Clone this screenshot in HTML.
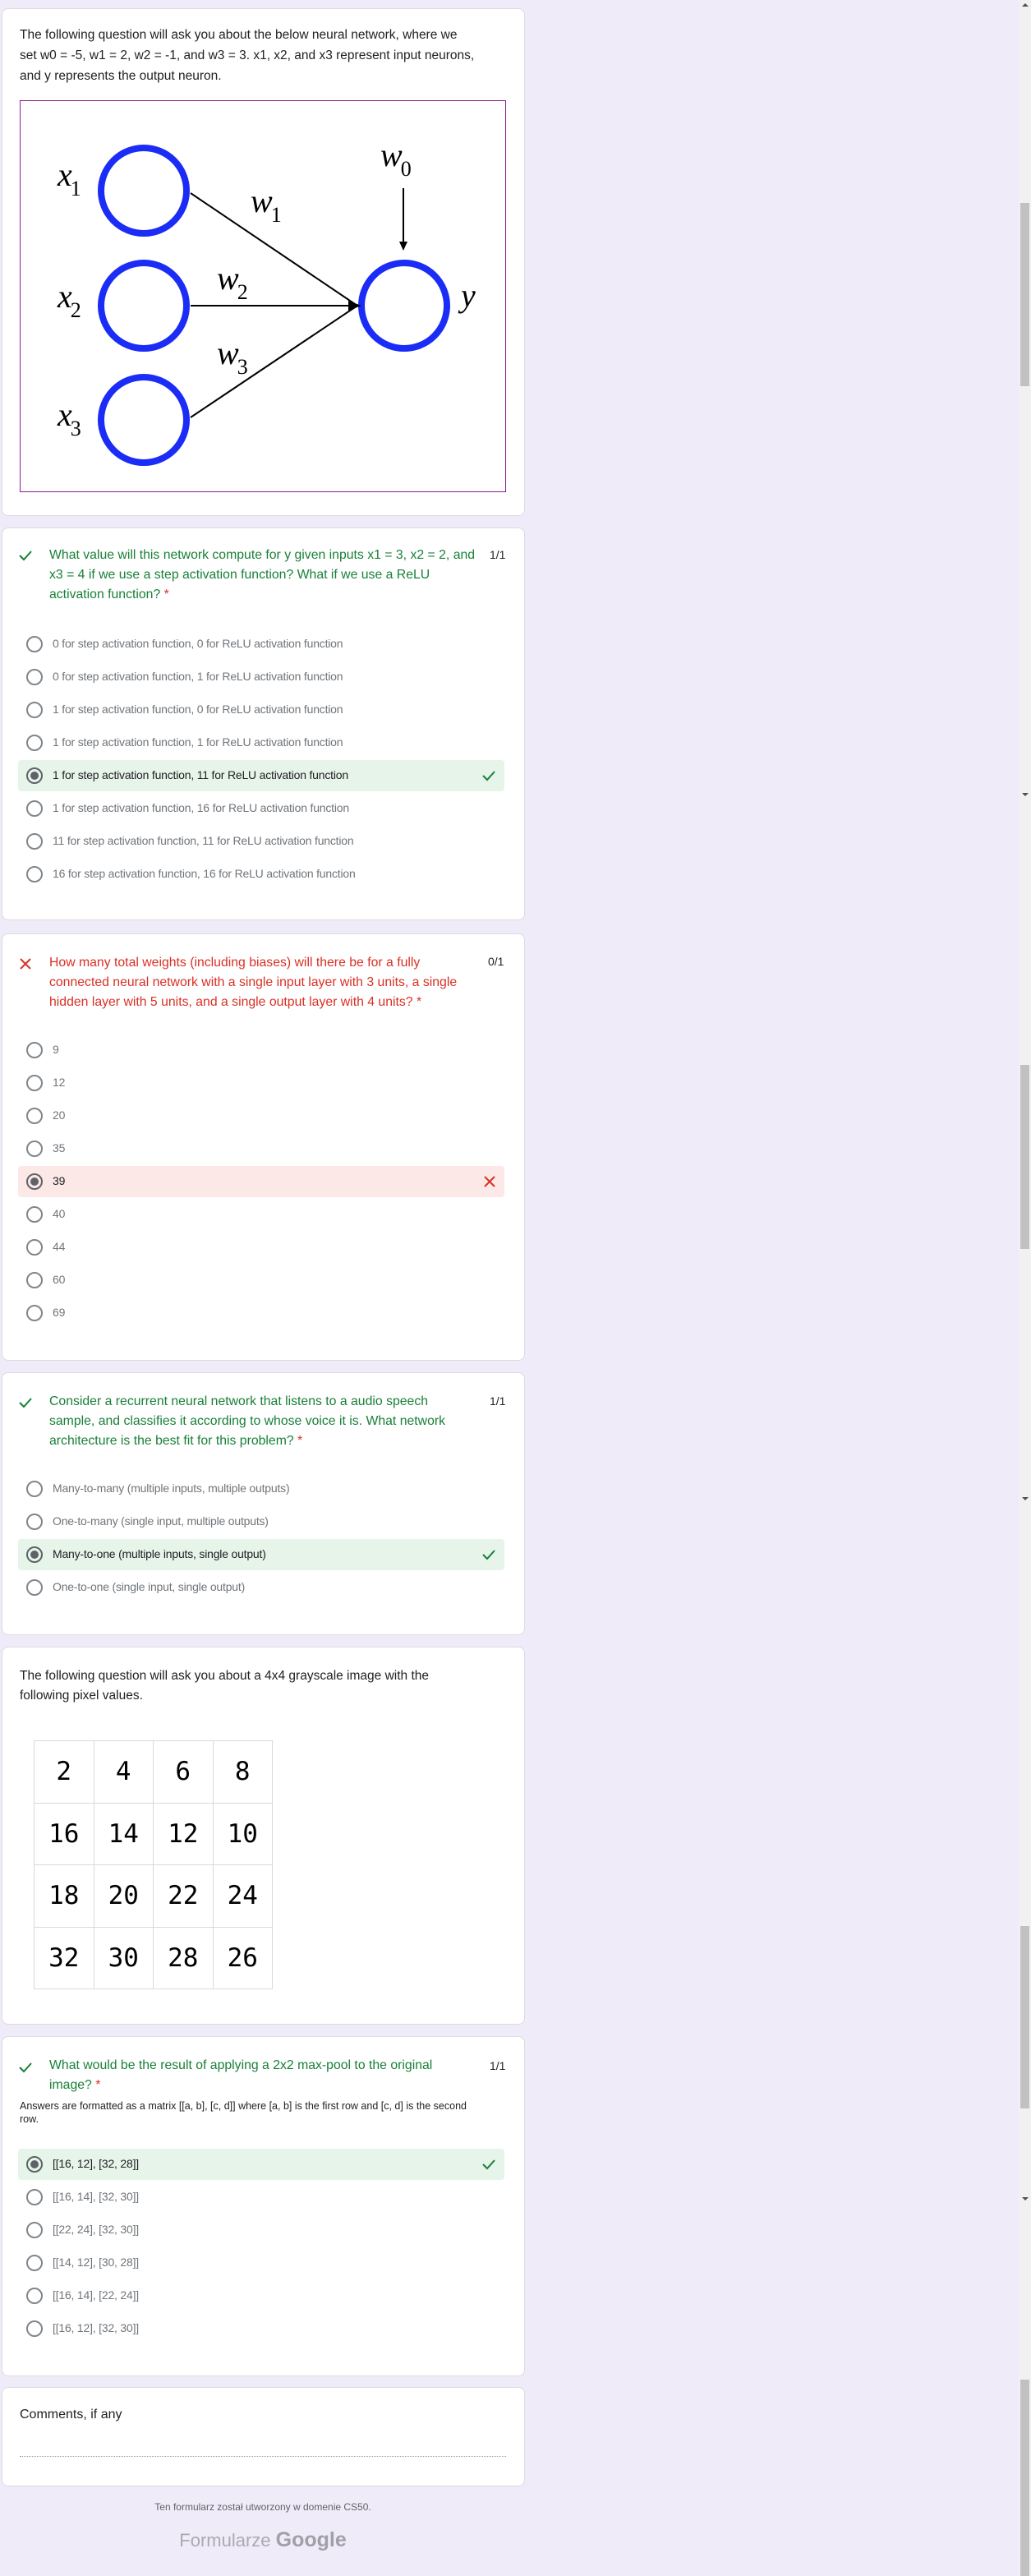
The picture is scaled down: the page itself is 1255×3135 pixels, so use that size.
<!DOCTYPE html>
<html><head><meta charset="utf-8"><style>
*{margin:0;padding:0;box-sizing:border-box}
body{width:1255px;height:3135px;background:#efebf8;position:relative;overflow:hidden;font-family:"Liberation Sans",Arial,sans-serif;color:#202124}
.card{position:absolute;left:2px;width:637px;background:#fff;border:1px solid #dadce0;border-radius:8px}
.a{position:absolute;white-space:nowrap}
.hd{font-size:15.5px;line-height:25px;color:#202124;left:24px}
.q{font-size:15.8px;line-height:24px;left:60px}
.g{color:#188038}.r{color:#d93025}
.pts{font-size:14px;color:#202124}
.opt{position:absolute;left:22px;width:592px;height:38px;border-radius:4px}
.rad{position:absolute;left:10px;top:9px;width:20px;height:20px;border:2px solid #80868b;border-radius:50%}
.rad.s{border-color:#5f6368}
.rad.s::after{content:"";position:absolute;left:3px;top:3px;width:10px;height:10px;border-radius:50%;background:#5f6368}
.ot{position:absolute;left:42px;top:10px;font-size:14px;color:#70757a;white-space:nowrap;letter-spacing:-0.2px}
.sel .ot{color:#202124}
.okb{background:#e6f4ea}.bad{background:#fce8e6}
.mk{position:absolute;right:10px;top:11px}
.sb{position:absolute;left:1240px;top:0;width:15px;height:3135px;background:#f1f1f1}
.th{position:absolute;left:1242px;width:11px;background:#c1c1c1}
.ar{position:absolute;left:1244px;width:0;height:0;border-left:4px solid transparent;border-right:4px solid transparent}
.up{border-bottom:4px solid #505050}.dn{border-top:4px solid #505050}
table{border-collapse:collapse;position:absolute;left:41px;top:2118px}
td{width:72.5px;height:75.5px;border:1px solid #d9d9d9;text-align:center;font-family:"DejaVu Sans Mono",monospace;font-size:31px;color:#000}
</style></head><body>

<div class="sb"></div>
<div class="th" style="top:247px;height:223px"></div>
<div class="th" style="top:1296px;height:224px"></div>
<div class="th" style="top:2344px;height:222px"></div>
<div class="th" style="top:2896px;height:239px"></div>
<div class="ar up" style="top:4px"></div>
<div class="ar dn" style="top:965px"></div>
<div class="ar dn" style="top:1822px"></div>
<div class="ar dn" style="top:2674px"></div>

<!-- card 1 -->
<div class="card" style="top:10px;height:618px"></div>
<div class="a hd" style="top:30px">The following question will ask you about the below neural network, where we<br>set w0 = -5, w1 = 2, w2 = -1, and w3 = 3. x1, x2, and x3 represent input neurons,<br>and y represents the output neuron.</div>
<div class="a" style="left:24px;top:122px;width:592px;height:477px;border:1px solid #8b1a8b;background:#fff"></div>
<svg class="a" style="left:0;top:0" width="640" height="620">
<g fill="none" stroke="#1a2cf5" stroke-width="8">
<circle cx="175" cy="232" r="52"/><circle cx="175" cy="372" r="52"/><circle cx="175" cy="511" r="52"/><circle cx="492" cy="372" r="52"/>
</g>
<g stroke="#000" stroke-width="2">
<line x1="232" y1="235" x2="432" y2="370"/><line x1="232" y1="372" x2="432" y2="372"/><line x1="232" y1="508" x2="432" y2="374"/>
<line x1="491" y1="229" x2="491" y2="296"/>
</g>
<path d="M486 294 L491 305 L496 294 Z" fill="#000"/>
<path d="M424 366 L440 372 L424 378 Z" fill="#000"/>
<g font-family="Liberation Serif,serif" fill="#000">
<text x="70" y="226" font-size="40" font-style="italic">x<tspan font-size="26" font-style="normal" dy="12" dx="-2">1</tspan></text>
<text x="70" y="374" font-size="40" font-style="italic">x<tspan font-size="26" font-style="normal" dy="12" dx="-2">2</tspan></text>
<text x="70" y="518" font-size="40" font-style="italic">x<tspan font-size="26" font-style="normal" dy="12" dx="-2">3</tspan></text>
<text x="463" y="202" font-size="40" font-style="italic">w<tspan font-size="26" font-style="normal" dy="12" dx="-2">0</tspan></text>
<text x="305" y="258" font-size="40" font-style="italic">w<tspan font-size="26" font-style="normal" dy="12" dx="-2">1</tspan></text>
<text x="264" y="352" font-size="40" font-style="italic">w<tspan font-size="26" font-style="normal" dy="12" dx="-2">2</tspan></text>
<text x="264" y="443" font-size="40" font-style="italic">w<tspan font-size="26" font-style="normal" dy="12" dx="-2">3</tspan></text>
<text x="561" y="373" font-size="40" font-style="italic">y</text>
</g>
</svg>

<!-- card 2 -->
<div class="card" style="top:642px;height:478px"></div>
<svg class="a" style="left:22px;top:668px" width="18" height="16"><path d="M2 8 L7 13 L16 3" fill="none" stroke="#188038" stroke-width="2"/></svg>
<div class="a q g" style="top:664px">What value will this network compute for y given inputs x1 = 3, x2 = 2, and<br>x3 = 4 if we use a step activation function? What if we use a ReLU<br>activation function? <span class="r">*</span></div>
<div class="a pts" style="left:596px;top:667px">1/1</div>
<div class="opt" style="top:765px"><div class="rad"></div><div class="ot">0 for step activation function, 0 for ReLU activation function</div></div>
<div class="opt" style="top:805px"><div class="rad"></div><div class="ot">0 for step activation function, 1 for ReLU activation function</div></div>
<div class="opt" style="top:845px"><div class="rad"></div><div class="ot">1 for step activation function, 0 for ReLU activation function</div></div>
<div class="opt" style="top:885px"><div class="rad"></div><div class="ot">1 for step activation function, 1 for ReLU activation function</div></div>
<div class="opt okb sel" style="top:925px"><div class="rad s"></div><div class="ot">1 for step activation function, 11 for ReLU activation function</div><svg class="mk" width="18" height="16"><path d="M2 8 L7 13 L16 3" fill="none" stroke="#188038" stroke-width="2"/></svg></div>
<div class="opt" style="top:965px"><div class="rad"></div><div class="ot">1 for step activation function, 16 for ReLU activation function</div></div>
<div class="opt" style="top:1005px"><div class="rad"></div><div class="ot">11 for step activation function, 11 for ReLU activation function</div></div>
<div class="opt" style="top:1045px"><div class="rad"></div><div class="ot">16 for step activation function, 16 for ReLU activation function</div></div>

<!-- card 3 -->
<div class="card" style="top:1136px;height:520px"></div>
<svg class="a" style="left:23px;top:1165px" width="16" height="16"><path d="M2 2 L14 14 M14 2 L2 14" stroke="#d93025" stroke-width="2"/></svg>
<div class="a q r" style="top:1160px">How many total weights (including biases) will there be for a fully<br>connected neural network with a single input layer with 3 units, a single<br>hidden layer with 5 units, and a single output layer with 4 units? *</div>
<div class="a pts" style="left:594px;top:1162px">0/1</div>
<div class="opt" style="top:1259px"><div class="rad"></div><div class="ot">9</div></div>
<div class="opt" style="top:1299px"><div class="rad"></div><div class="ot">12</div></div>
<div class="opt" style="top:1339px"><div class="rad"></div><div class="ot">20</div></div>
<div class="opt" style="top:1379px"><div class="rad"></div><div class="ot">35</div></div>
<div class="opt bad sel" style="top:1419px"><div class="rad s"></div><div class="ot">39</div><svg class="mk" width="16" height="16"><path d="M2 2 L14 14 M14 2 L2 14" stroke="#d93025" stroke-width="2"/></svg></div>
<div class="opt" style="top:1459px"><div class="rad"></div><div class="ot">40</div></div>
<div class="opt" style="top:1499px"><div class="rad"></div><div class="ot">44</div></div>
<div class="opt" style="top:1539px"><div class="rad"></div><div class="ot">60</div></div>
<div class="opt" style="top:1579px"><div class="rad"></div><div class="ot">69</div></div>

<!-- card 4 -->
<div class="card" style="top:1670px;height:320px"></div>
<svg class="a" style="left:22px;top:1699px" width="18" height="16"><path d="M2 8 L7 13 L16 3" fill="none" stroke="#188038" stroke-width="2"/></svg>
<div class="a q g" style="top:1694px">Consider a recurrent neural network that listens to a audio speech<br>sample, and classifies it according to whose voice it is. What network<br>architecture is the best fit for this problem? <span class="r">*</span></div>
<div class="a pts" style="left:596px;top:1697px">1/1</div>
<div class="opt" style="top:1793px"><div class="rad"></div><div class="ot">Many-to-many (multiple inputs, multiple outputs)</div></div>
<div class="opt" style="top:1833px"><div class="rad"></div><div class="ot">One-to-many (single input, multiple outputs)</div></div>
<div class="opt okb sel" style="top:1873px"><div class="rad s"></div><div class="ot">Many-to-one (multiple inputs, single output)</div><svg class="mk" width="18" height="16"><path d="M2 8 L7 13 L16 3" fill="none" stroke="#188038" stroke-width="2"/></svg></div>
<div class="opt" style="top:1913px"><div class="rad"></div><div class="ot">One-to-one (single input, single output)</div></div>

<!-- card 5 -->
<div class="card" style="top:2004px;height:460px"></div>
<div class="a hd" style="top:2028px;line-height:24px">The following question will ask you about a 4x4 grayscale image with the<br>following pixel values.</div>
<table>
<tr><td>2</td><td>4</td><td>6</td><td>8</td></tr>
<tr><td>16</td><td>14</td><td>12</td><td>10</td></tr>
<tr><td>18</td><td>20</td><td>22</td><td>24</td></tr>
<tr><td>32</td><td>30</td><td>28</td><td>26</td></tr>
</table>

<!-- card 6 -->
<div class="card" style="top:2478px;height:414px"></div>
<svg class="a" style="left:22px;top:2508px" width="18" height="16"><path d="M2 8 L7 13 L16 3" fill="none" stroke="#188038" stroke-width="2"/></svg>
<div class="a q g" style="top:2502px">What would be the result of applying a 2x2 max-pool to the original<br>image? <span class="r">*</span></div>
<div class="a pts" style="left:596px;top:2506px">1/1</div>
<div class="a" style="left:24px;top:2555px;font-size:12.5px;line-height:16px;color:#202124">Answers are formatted as a matrix [[a, b], [c, d]] where [a, b] is the first row and [c, d] is the second<br>row.</div>
<div class="opt okb sel" style="top:2615px"><div class="rad s"></div><div class="ot">[[16, 12], [32, 28]]</div><svg class="mk" width="18" height="16"><path d="M2 8 L7 13 L16 3" fill="none" stroke="#188038" stroke-width="2"/></svg></div>
<div class="opt" style="top:2655px"><div class="rad"></div><div class="ot">[[16, 14], [32, 30]]</div></div>
<div class="opt" style="top:2695px"><div class="rad"></div><div class="ot">[[22, 24], [32, 30]]</div></div>
<div class="opt" style="top:2735px"><div class="rad"></div><div class="ot">[[14, 12], [30, 28]]</div></div>
<div class="opt" style="top:2775px"><div class="rad"></div><div class="ot">[[16, 14], [22, 24]]</div></div>
<div class="opt" style="top:2815px"><div class="rad"></div><div class="ot">[[16, 12], [32, 30]]</div></div>

<!-- card 7 -->
<div class="card" style="top:2905px;height:121px"></div>
<div class="a" style="left:24px;top:2930px;font-size:16px;color:#202124">Comments, if any</div>
<div class="a" style="left:24px;top:2989px;width:592px;border-top:1px dotted #9aa0a6"></div>

<div class="a" style="left:0;width:640px;text-align:center;top:3044px;font-size:12px;color:#5f6368">Ten formularz został utworzony w domenie CS50.</div>
<div class="a" style="left:0;width:640px;text-align:center;top:3077px;font-size:22px;color:#aaaab2">Formularze <b style="font-size:25px;color:#a0a0a8">Google</b></div>

</body></html>
